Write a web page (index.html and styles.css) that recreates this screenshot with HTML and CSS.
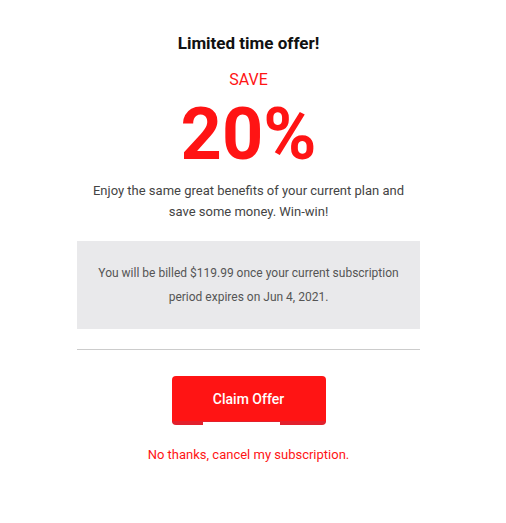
FILE: index.html
```html
<!DOCTYPE html>
<html lang="en">
<head>
    <meta charset="UTF-8">
    <meta name="viewport" content="width=device-width, initial-scale=1.0">
    <title>Limited time offer</title>
    <link rel="stylesheet" href="styles.css">
</head>
<body>
    <div class="offer">
        <h1 class="offer-title">Limited time offer!</h1>
        <p class="save-label">SAVE</p>
        <p class="save-amount">20%</p>
        <p class="offer-text">Enjoy the same great benefits of your current plan and save some money. Win-win!</p>
        <div class="billing-box">
            <p>You will be billed $119.99 once your current subscription period expires on Jun 4, 2021.</p>
        </div>
        <hr class="divider">
        <div class="actions">
            <button class="claim-btn">Claim Offer</button>
            <a class="cancel-link" href="#">No thanks, cancel my subscription.</a>
        </div>
    </div>
</body>
</html>
```

FILE: styles.css
```css
body {
    margin: 0;
    background: #fff;
    font-family: Roboto, Arial, sans-serif;
    color: #444;
}
.offer {
    width: 343px;
    margin-left: 77px;
    padding-top: 31px;
    text-align: center;
}
.offer-title {
    margin: 0;
    font-size: 17px;
    font-weight: bold;
    color: #111;
    line-height: 24px;
}
.save-label {
    margin: 14px 0 0;
    font-size: 16px;
    line-height: 22px;
    color: #ff1414;
}
.save-amount {
    margin: 8px 0 0;
    font-size: 72px;
    font-weight: bold;
    line-height: 72px;
    color: #ff1414;
}
.offer-text {
    margin: 9px 0 0;
    padding: 0 12px;
    font-size: 13px;
    line-height: 21px;
    color: #444;
}
.billing-box {
    margin-top: 19px;
    background: #e9e9eb;
    padding: 20px 14px;
}
.billing-box p {
    margin: 0;
    font-size: 12px;
    line-height: 24px;
    color: #555;
}
.divider {
    margin: 20px 0 0;
    border: none;
    border-top: 1px solid #ccc;
}
.actions {
    display: flex;
    flex-direction: column;
    align-items: center;
    padding-top: 26px;
}
.claim-btn {
    position: relative;
    width: 154px;
    height: 49px;
    border: none;
    border-bottom: 4px solid #e2202c;
    border-radius: 4px;
    background: #ff1414;
    color: #fff;
    font-family: inherit;
    font-size: 14px;
    font-weight: 500;
    padding-top: 2px;
    cursor: pointer;
}
.claim-btn::after {
    content: "";
    position: absolute;
    left: 31px;
    bottom: -4px;
    width: 77px;
    height: 3px;
    background: #fff;
}
.cancel-link {
    margin-top: 22px;
    font-size: 13px;
    color: #ff1414;
    text-decoration: none;
}
```
